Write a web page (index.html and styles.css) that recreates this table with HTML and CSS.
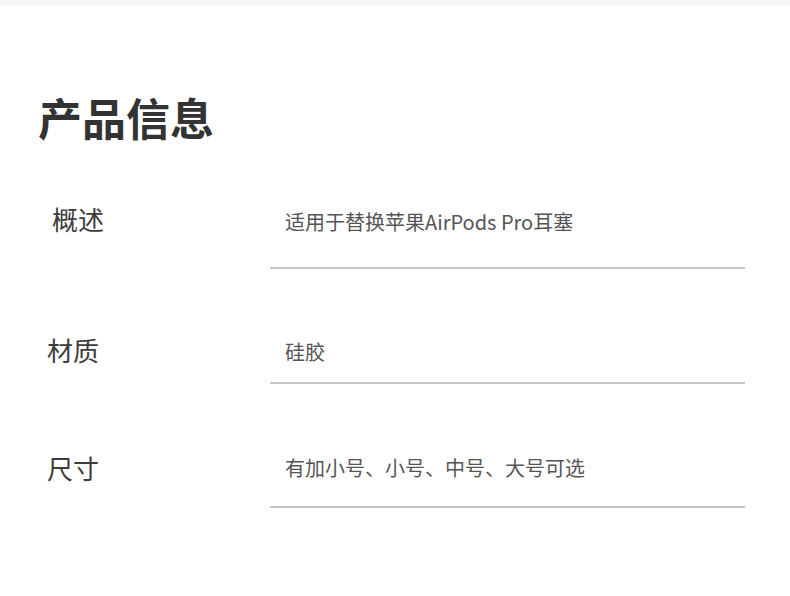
FILE: index.html
```html
<!DOCTYPE html>
<html lang="zh-CN">
<head>
    <meta charset="UTF-8">
    <meta name="viewport" content="width=device-width, initial-scale=1.0">
    <title>产品信息</title>
    <link rel="stylesheet" href="styles.css">
</head>
<body>
    <div class="top-band"></div>

    <h1 class="title">产品信息</h1>

    <div class="info-row row-summary">
        <div class="info-label">概述</div>
        <div class="info-value">适用于替换苹果AirPods Pro耳塞</div>
    </div>

    <div class="info-row row-material">
        <div class="info-label">材质</div>
        <div class="info-value">硅胶</div>
    </div>

    <div class="info-row row-size">
        <div class="info-label">尺寸</div>
        <div class="info-value">有加小号、小号、中号、大号可选</div>
    </div>
</body>
</html>
```

FILE: styles.css
```css
body {
    font-family: "Noto Sans CJK SC", "Noto Sans", sans-serif;
    background-color: #fff;
    color: #333;
    margin: 0;
    padding: 0;
}

.top-band {
    height: 5px;
    background-color: #f6f6f6;
}

.title {
    margin: 90px 0 0 38px;
    font-size: 44px;
    line-height: 44px;
    font-weight: 700;
    color: #333;
}

.info-row {
    display: grid;
    grid-template-columns: 270px 475px;
    align-items: start;
}

.info-label {
    font-size: 26px;
    line-height: 26px;
    color: #3c3c3c;
    padding-left: 47px;
}

.info-value {
    font-size: 20px;
    line-height: 20px;
    color: #555;
    padding-left: 15px;
    border-bottom: 2px solid #c6c6c6;
}

.row-summary .info-label {
    margin-top: 67px;
    padding-left: 52px;
}

.row-summary .info-value {
    padding-top: 73px;
    padding-bottom: 35px;
}

.row-material .info-label {
    margin-top: 68px;
}

.row-material .info-value {
    padding-top: 73px;
    padding-bottom: 20px;
}

.row-size .info-label {
    margin-top: 71px;
}

.row-size .info-value {
    padding-top: 74px;
    padding-bottom: 28px;
}
```
